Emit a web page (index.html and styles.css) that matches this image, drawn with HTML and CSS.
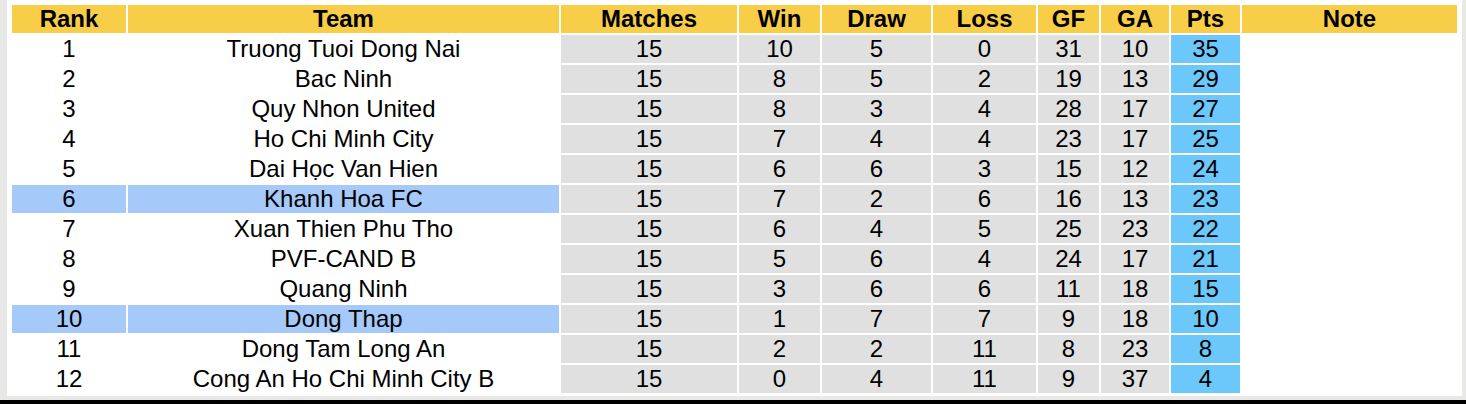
FILE: index.html
```html
<!DOCTYPE html>
<html>
<head>
<meta charset="utf-8">
<link rel="stylesheet" href="styles.css">
</head>
<body>
<div class="page">
<table class="standings">
<colgroup>
<col class="c-rank"><col class="c-team"><col class="c-matches"><col class="c-win"><col class="c-draw"><col class="c-loss"><col class="c-gf"><col class="c-ga"><col class="c-pts"><col class="c-note">
</colgroup>
<thead>
<tr><th>Rank</th><th>Team</th><th>Matches</th><th>Win</th><th>Draw</th><th>Loss</th><th>GF</th><th>GA</th><th>Pts</th><th>Note</th></tr>
</thead>
<tbody>
<tr><td>1</td><td>Truong Tuoi Dong Nai</td><td class="g">15</td><td class="g">10</td><td class="g">5</td><td class="g">0</td><td class="g">31</td><td class="g">10</td><td class="p">35</td><td></td></tr>
<tr><td>2</td><td>Bac Ninh</td><td class="g">15</td><td class="g">8</td><td class="g">5</td><td class="g">2</td><td class="g">19</td><td class="g">13</td><td class="p">29</td><td></td></tr>
<tr><td>3</td><td>Quy Nhon United</td><td class="g">15</td><td class="g">8</td><td class="g">3</td><td class="g">4</td><td class="g">28</td><td class="g">17</td><td class="p">27</td><td></td></tr>
<tr><td>4</td><td>Ho Chi Minh City</td><td class="g">15</td><td class="g">7</td><td class="g">4</td><td class="g">4</td><td class="g">23</td><td class="g">17</td><td class="p">25</td><td></td></tr>
<tr><td>5</td><td>Dai Học Van Hien</td><td class="g">15</td><td class="g">6</td><td class="g">6</td><td class="g">3</td><td class="g">15</td><td class="g">12</td><td class="p">24</td><td></td></tr>
<tr class="hl"><td>6</td><td>Khanh Hoa FC</td><td class="g">15</td><td class="g">7</td><td class="g">2</td><td class="g">6</td><td class="g">16</td><td class="g">13</td><td class="p">23</td><td class="n"></td></tr>
<tr><td>7</td><td>Xuan Thien Phu Tho</td><td class="g">15</td><td class="g">6</td><td class="g">4</td><td class="g">5</td><td class="g">25</td><td class="g">23</td><td class="p">22</td><td></td></tr>
<tr><td>8</td><td>PVF-CAND B</td><td class="g">15</td><td class="g">5</td><td class="g">6</td><td class="g">4</td><td class="g">24</td><td class="g">17</td><td class="p">21</td><td></td></tr>
<tr><td>9</td><td>Quang Ninh</td><td class="g">15</td><td class="g">3</td><td class="g">6</td><td class="g">6</td><td class="g">11</td><td class="g">18</td><td class="p">15</td><td></td></tr>
<tr class="hl"><td>10</td><td>Dong Thap</td><td class="g">15</td><td class="g">1</td><td class="g">7</td><td class="g">7</td><td class="g">9</td><td class="g">18</td><td class="p">10</td><td class="n"></td></tr>
<tr><td>11</td><td>Dong Tam Long An</td><td class="g">15</td><td class="g">2</td><td class="g">2</td><td class="g">11</td><td class="g">8</td><td class="g">23</td><td class="p">8</td><td></td></tr>
<tr><td>12</td><td>Cong An Ho Chi Minh City B</td><td class="g">15</td><td class="g">0</td><td class="g">4</td><td class="g">11</td><td class="g">9</td><td class="g">37</td><td class="p">4</td><td></td></tr>
</tbody>
</table>
</div>
<div class="bar"></div>
</body>
</html>
```

FILE: styles.css
```css
html, body {
  margin: 0;
  padding: 0;
}
body {
  background: #e8e8e6;
  width: 1466px;
  height: 404px;
  overflow: hidden;
  font-family: "Liberation Sans", Arial, sans-serif;
}
.page {
  box-sizing: border-box;
  margin-left: 7px;
  width: 1455px;
  height: 396px;
  background: #ffffff;
  padding: 3px 0 0 3px;
}
.bar {
  margin-top: 4px;
  height: 4px;
  background: #000000;
}
.standings {
  table-layout: fixed;
  width: 1449px;
  border-collapse: separate;
  border-spacing: 2px;
  font-size: 24px;
  color: #000;
}
.c-rank { width: 114px; }
.c-team { width: 431px; }
.c-matches { width: 176px; }
.c-win { width: 81px; }
.c-draw { width: 109px; }
.c-loss { width: 103px; }
.c-gf { width: 61px; }
.c-ga { width: 68px; }
.c-pts { width: 69px; }
.c-note { width: 215px; }
.standings th,
.standings td {
  padding: 0;
  height: 28px;
  line-height: 28px;
  text-align: center;
  white-space: nowrap;
  overflow: hidden;
}
.standings th {
  background: #f8cd48;
  font-weight: bold;
}
.standings td.g {
  background: #e0e0e0;
}
.standings td.p {
  background: #6cc8fb;
}
.standings tr.hl td {
  background: #a5c9f9;
}
.standings tr.hl td.g {
  background: #e0e0e0;
}
.standings tr.hl td.p {
  background: #6cc8fb;
}
.standings tr.hl td.n {
  background: #ffffff;
}
```
